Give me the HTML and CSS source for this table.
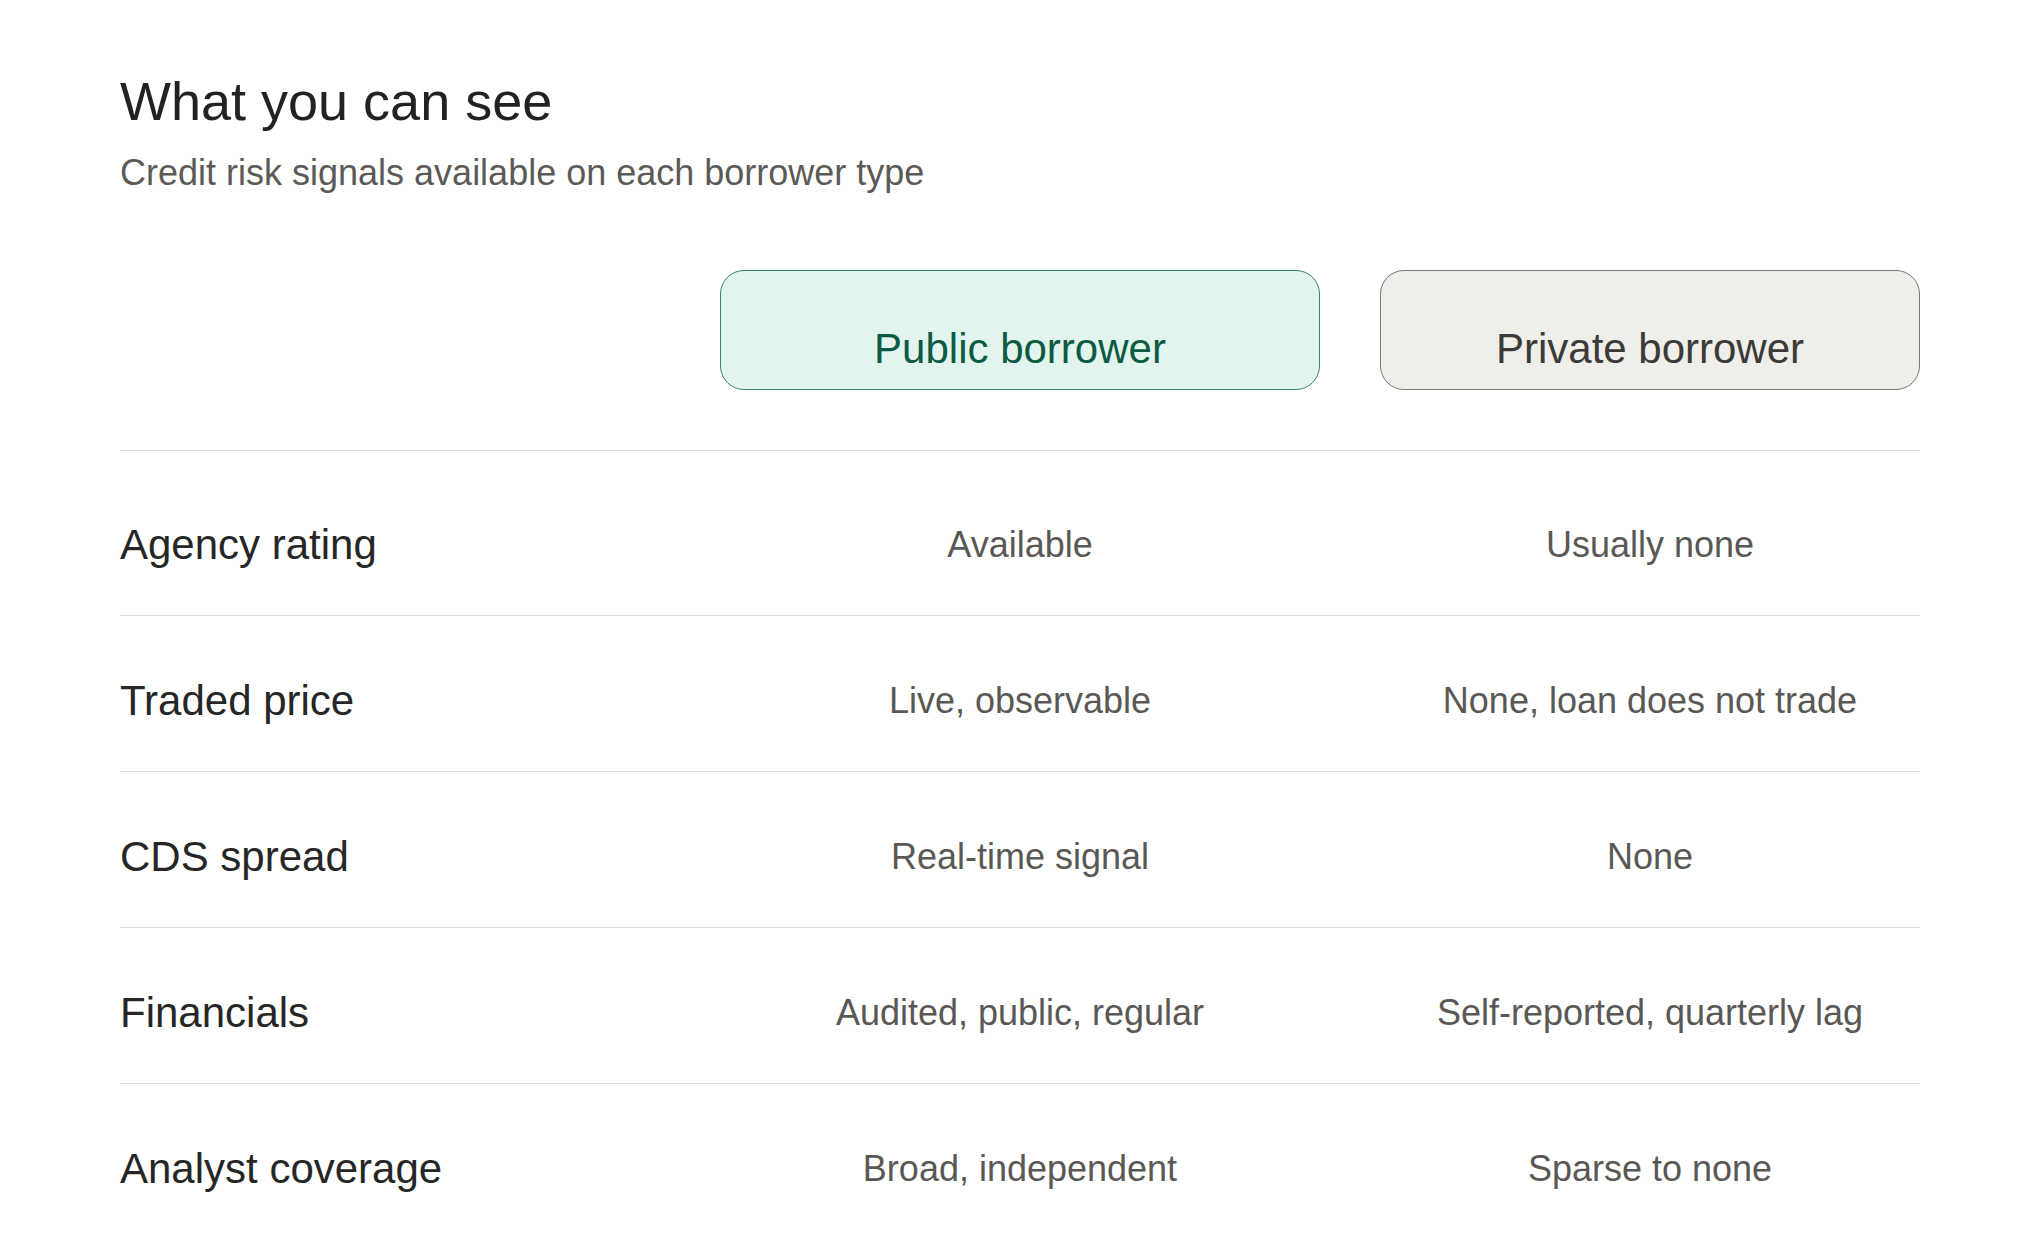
FILE: index.html
```html
<!DOCTYPE html>
<html lang="en">
<head>
<meta charset="utf-8">
<title>What you can see</title>
<link rel="stylesheet" href="styles.css">
</head>
<body>
<main class="page">
  <h1 class="title">What you can see</h1>
  <p class="subtitle">Credit risk signals available on each borrower type</p>

  <div class="grid header">
    <div class="corner"></div>
    <div class="pill pill-public">Public borrower</div>
    <div class="pill pill-private">Private borrower</div>
  </div>

  <div class="rows">
    <div class="grid row">
      <div class="label">Agency rating</div>
      <div class="value">Available</div>
      <div class="value">Usually none</div>
    </div>
    <div class="grid row">
      <div class="label">Traded price</div>
      <div class="value">Live, observable</div>
      <div class="value">None, loan does not trade</div>
    </div>
    <div class="grid row">
      <div class="label">CDS spread</div>
      <div class="value">Real-time signal</div>
      <div class="value">None</div>
    </div>
    <div class="grid row">
      <div class="label">Financials</div>
      <div class="value">Audited, public, regular</div>
      <div class="value">Self-reported, quarterly lag</div>
    </div>
    <div class="grid row">
      <div class="label">Analyst coverage</div>
      <div class="value">Broad, independent</div>
      <div class="value">Sparse to none</div>
    </div>
  </div>
</main>
</body>
</html>
```

FILE: styles.css
```css
* {
  box-sizing: border-box;
}

html, body {
  margin: 0;
  padding: 0;
  background: #ffffff;
}

body {
  font-family: "Liberation Sans", Arial, Helvetica, sans-serif;
  color: #222222;
}

.page {
  width: 2040px;
  padding: 70px 120px 0 120px;
}

.title {
  margin: 0;
  font-size: 54px;
  font-weight: 400;
  line-height: normal;
  color: #222222;
}

.subtitle {
  margin: 20px 0 0 0;
  font-size: 36px;
  line-height: normal;
  color: #5c5a57;
}

.grid {
  display: grid;
  grid-template-columns: 540px 600px 540px;
  column-gap: 60px;
}

.header {
  margin-top: 76px;
  padding-bottom: 60px;
  border-bottom: 1.5px solid #dedcd6;
}

.pill {
  height: 120px;
  padding-top: 54px;
  border-radius: 24px;
  text-align: center;
  font-size: 42px;
  line-height: normal;
}

.pill-public {
  background: #e1f5ee;
  border: 1.5px solid #3a866b;
  color: #0d5a44;
}

.pill-private {
  background: #f0eee9;
  border: 1.5px solid #7b7975;
  color: #3b3a38;
}

.rows {
  padding-top: 9px;
}

.row {
  align-items: center;
  padding: 61px 0 46px 0;
  border-bottom: 1.5px solid #dedcd6;
}

.row:last-child {
  border-bottom: none;
}

.label {
  font-size: 42px;
  line-height: normal;
  color: #262626;
}

.value {
  font-size: 36px;
  line-height: normal;
  text-align: center;
  color: #5a5855;
}
```
